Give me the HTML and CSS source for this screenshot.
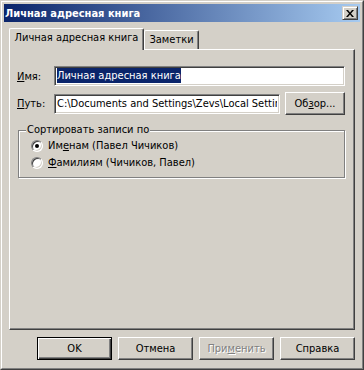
FILE: index.html
```html
<!DOCTYPE html>
<html lang="ru">
<head>
    <meta charset="UTF-8">
    <title>Личная адресная книга</title>
    <link rel="stylesheet" href="styles.css">
</head>
<body>
    <div class="window">
        <div class="frame">
            <div class="titlebar">
                <span class="title">Личная адресная книга</span>
                <span class="close">
                    <svg width="8" height="7" viewBox="0 0 8 7"><path d="M0 0h2l2 2.4 2-2.4h2l-3 3.5 3 3.5h-2l-2-2.4-2 2.4h-2l3-3.5z" fill="#000"/></svg>
                </span>
            </div>
            <div class="dialog">
                <div class="tabs">
                    <div class="tab active">Личная адресная книга</div>
                    <div class="tab">Заметки</div>
                </div>
                <div class="panel">
                    <div class="row">
                        <span class="label"><u>И</u>мя:</span>
                        <div class="field wide"><span class="selected">Личная адресная книга</span></div>
                    </div>
                    <div class="row tall">
                        <span class="label"><u>П</u>уть:</span>
                        <div class="field narrow"><span class="clip">C:\Documents and Settings\Zevs\Local Setting</span></div>
                        <button class="btn browse">Об<u>з</u>ор...</button>
                    </div>
                    <div class="group">
                        <span class="group-title">Сортировать записи по</span>
                        <div class="radio-row"><span class="radio checked"></span>Им<u>е</u>нам (Павел Чичиков)</div>
                        <div class="radio-row"><span class="radio"></span><u>Ф</u>амилиям (Чичиков, Павел)</div>
                    </div>
                </div>
                <div class="buttons">
                    <button class="btn default">OK</button>
                    <button class="btn">Отмена</button>
                    <button class="btn disabled">При<u>м</u>енить</button>
                    <button class="btn">Справка</button>
                </div>
            </div>
        </div>
    </div>
</body>
</html>
```

FILE: styles.css
```css
body {
    margin: 0;
    font-family: "DejaVu Sans Condensed", "DejaVu Sans", sans-serif;
    font-stretch: condensed;
    font-size: 11px;
    color: #000;
}
.window {
    width: 364px;
    height: 370px;
    box-sizing: border-box;
    border: 1px solid;
    border-color: #d4d0c8 #404040 #404040 #d4d0c8;
    background: #d4d0c8;
}
.frame {
    height: 100%;
    box-sizing: border-box;
    border: 1px solid;
    border-color: #fff #808080 #808080 #fff;
    padding: 2px;
    display: flex;
    flex-direction: column;
}
.titlebar {
    height: 18px;
    flex: none;
    background: linear-gradient(to right, #0a246a, #a6caf0);
    display: flex;
    align-items: center;
    justify-content: space-between;
    padding: 0 2px 0 1px;
}
.title {
    color: #fff;
    font-weight: bold;
}
.close {
    width: 16px;
    height: 14px;
    box-sizing: border-box;
    border: 1px solid;
    border-color: #d4d0c8 #404040 #404040 #d4d0c8;
    box-shadow: inset 1px 1px #fff, inset -1px -1px #808080;
    background: #d4d0c8;
    display: flex;
    align-items: center;
    justify-content: center;
}
.close svg {
    display: block;
    margin-left: -1px;
}
.dialog {
    flex: 1;
    display: flex;
    flex-direction: column;
    padding: 6px 5px 6px 5px;
}
.tabs {
    height: 21px;
    display: flex;
    align-items: flex-end;
}
.tab {
    height: 19px;
    box-sizing: border-box;
    width: 55px;
    border-top: 1px solid #fff;
    border-left: 1px solid #fff;
    border-right: 1px solid #404040;
    border-radius: 2px 2px 0 0;
    box-shadow: inset -1px 0 #808080;
    display: flex;
    align-items: center;
    justify-content: center;
    padding-bottom: 1px;
}
.tab.active {
    position: relative;
    z-index: 1;
    width: 135px;
    height: 22px;
    margin-bottom: -1px;
    background: #d4d0c8;
    padding-bottom: 4px;
}
.panel {
    flex: 1;
    border: 1px solid;
    border-color: #fff #404040 #404040 #fff;
    box-shadow: inset -1px -1px #808080;
    padding: 16px 9px 0 7px;
}
.row {
    display: flex;
    align-items: center;
    height: 20px;
}
.row.tall {
    height: 23px;
    margin-top: 6px;
}
.label {
    width: 37px;
}
.field {
    height: 20px;
    box-sizing: border-box;
    border: 1px solid;
    border-color: #808080 #fff #fff #808080;
    box-shadow: inset 1px 1px #404040, inset -1px -1px #d4d0c8;
    background: #fff;
    padding: 0 2px;
    white-space: nowrap;
    overflow: hidden;
    line-height: 18px;
}
.wide {
    width: 291px;
}
.narrow {
    width: 226px;
}
.clip {
    display: block;
    overflow: hidden;
}
.selected {
    background: #0a246a;
    color: #fff;
    padding: 1px 0;
}
.btn {
    font: inherit;
    color: #000;
    height: 23px;
    width: 75px;
    box-sizing: border-box;
    border: 1px solid;
    border-color: #fff #404040 #404040 #fff;
    box-shadow: inset -1px -1px #808080;
    background: #d4d0c8;
    padding: 0;
}
.browse {
    width: 60px;
    margin-left: 5px;
}
.btn.default {
    border-color: #000;
    box-shadow: inset 1px 1px #fff, inset -1px -1px #404040, inset -2px -2px #808080;
}
.btn.disabled {
    color: #808080;
    text-shadow: 1px 1px #fff;
}
.group {
    position: relative;
    width: 327px;
    height: 48px;
    box-sizing: border-box;
    margin: 15px 0 0 1px;
    border: 1px solid #808080;
    box-shadow: inset 1px 1px #fff, 1px 1px #fff;
    padding: 6px 0 0 12px;
}
.group-title {
    position: absolute;
    left: 7px;
    top: -8px;
    padding: 0 1px;
    background: #d4d0c8;
    line-height: 13px;
}
.radio-row {
    height: 17px;
    display: flex;
    align-items: center;
}
.radio {
    width: 12px;
    height: 12px;
    box-sizing: border-box;
    border-radius: 50%;
    border: 1px solid;
    border-color: #808080 #fff #fff #808080;
    box-shadow: inset 1px 1px #404040, inset -1px -1px #d4d0c8;
    background: #fff;
    margin-right: 5px;
    display: flex;
    align-items: center;
    justify-content: center;
}
.radio.checked::after {
    content: "";
    width: 4px;
    height: 4px;
    border-radius: 50%;
    background: #000;
}
.buttons {
    display: flex;
    justify-content: flex-end;
    gap: 6px;
    margin-top: 7px;
}
```
